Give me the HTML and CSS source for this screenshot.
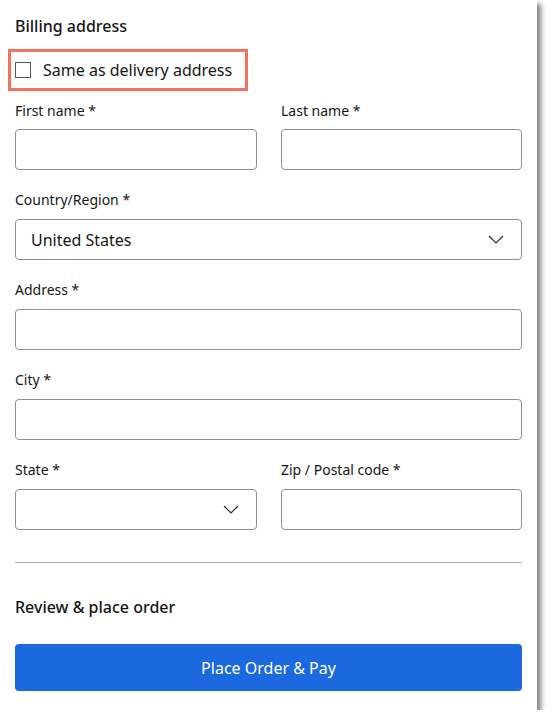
FILE: index.html
```html
<!DOCTYPE html>
<html lang="en">
<head>
<meta charset="utf-8">
<title>Billing address</title>
<link rel="stylesheet" href="styles.css">
</head>
<body>
<div class="card">
  <h2 class="section-title">Billing address</h2>
  <div class="highlight">
    <label class="check">
      <span class="box"></span>
      <span class="check-text">Same as delivery address</span>
    </label>
  </div>
  <div class="fields">
    <div class="row two">
      <div class="group">
        <div class="label">First name *</div>
        <div class="field"></div>
      </div>
      <div class="group">
        <div class="label">Last name *</div>
        <div class="field"></div>
      </div>
    </div>
    <div class="group">
      <div class="label">Country/Region *</div>
      <div class="field select">
        <span class="value">United States</span>
        <svg class="chev" width="16" height="9" viewBox="0 0 16 9"><polyline points="1,1 8,8 15,1" fill="none" stroke="#2b2b2b" stroke-width="1.2"/></svg>
      </div>
    </div>
    <div class="group">
      <div class="label">Address *</div>
      <div class="field"></div>
    </div>
    <div class="group">
      <div class="label">City *</div>
      <div class="field"></div>
    </div>
    <div class="row two">
      <div class="group">
        <div class="label">State *</div>
        <div class="field select">
          <span class="value"></span>
          <svg class="chev" width="16" height="9" viewBox="0 0 16 9"><polyline points="1,1 8,8 15,1" fill="none" stroke="#2b2b2b" stroke-width="1.2"/></svg>
        </div>
      </div>
      <div class="group">
        <div class="label">Zip / Postal code *</div>
        <div class="field"></div>
      </div>
    </div>
  </div>
  <hr class="divider">
  <h2 class="section-title review">Review &amp; place order</h2>
  <button class="pay">Place Order &amp; Pay</button>
</div>
</body>
</html>
```

FILE: styles.css
```css
* { box-sizing: border-box; }
html, body { margin: 0; padding: 0; background: #fff; }
body {
  font-family: "Noto Sans", "Liberation Sans", sans-serif;
  color: #161616;
}
.card {
  width: 537px;
  height: 710px;
  background: #fff;
  box-shadow: 4px 4px 5px rgba(0, 0, 0, 0.5);
  padding: 16px 15px 0 15px;
  display: flex;
  flex-direction: column;
}
.section-title {
  margin: 0;
  font-size: 16px;
  line-height: 20px;
  font-weight: 500;
}
.highlight {
  margin: 13px 0 0 -7px;
  width: 240px;
  height: 42px;
  border: 3px solid #f4715a;
  display: flex;
  align-items: center;
  padding-left: 4px;
}
.check {
  display: flex;
  align-items: center;
  gap: 12px;
}
.box {
  width: 16px;
  height: 16px;
  border: 1px solid #555;
  background: #fff;
}
.check-text {
  font-size: 16px;
  line-height: 20px;
}
.fields {
  margin-top: 11px;
  display: flex;
  flex-direction: column;
  gap: 21px;
}
.row.two {
  display: grid;
  grid-template-columns: 242px 241px;
  column-gap: 24px;
}
.label {
  font-size: 14px;
  line-height: 18px;
  margin-bottom: 10px;
}
.row.two:first-child .label {
  margin-bottom: 9px;
}
.field {
  height: 41px;
  border: 1px solid #8f8f8f;
  border-radius: 4px;
  background: #fff;
}
.select {
  display: flex;
  align-items: center;
  justify-content: space-between;
  padding: 0 17px 0 15px;
}
.value {
  font-size: 16px;
  line-height: 20px;
}
.chev { display: block; }
.divider {
  margin: 32px 0 0 0;
  border: 0;
  border-top: 1px solid #b3b3b3;
  height: 0;
}
.review {
  margin-top: 34px;
}
.pay {
  margin-top: 27px;
  height: 47px;
  width: 100%;
  border: 0;
  border-radius: 4px;
  background: #1b68df;
  color: #fff;
  font-family: inherit;
  font-size: 16px;
  cursor: pointer;
}
```
